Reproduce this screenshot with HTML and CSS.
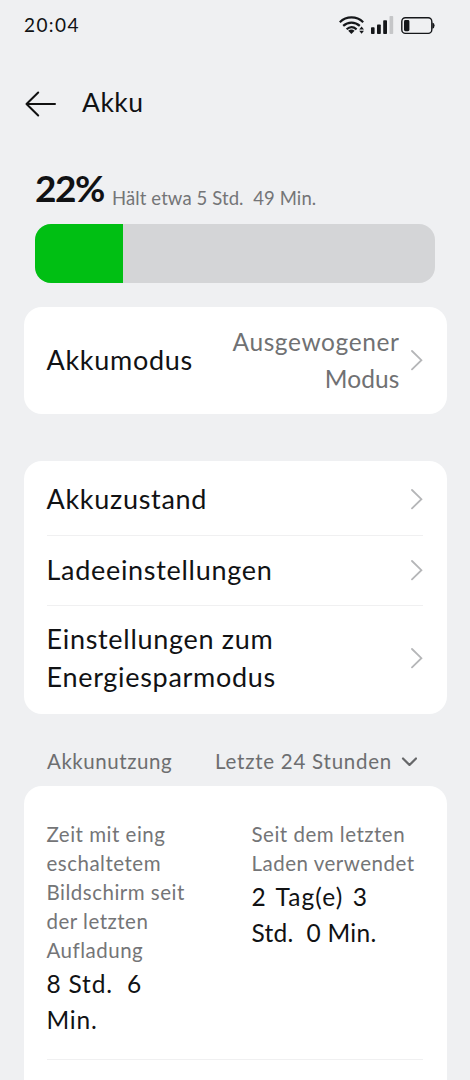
FILE: index.html
```html
<!DOCTYPE html>
<html lang="de">
<head>
    <meta charset="UTF-8">
    <meta name="viewport" content="width=device-width, initial-scale=1.0">
    <title>Akku</title>
    <link rel="stylesheet" href="styles.css">
</head>
<body>
    <div class="status-bar">
        <span class="clock">20:04</span>
        <svg class="status-icons" width="98" height="22" viewBox="338 15 98 22">
            <!-- wifi -->
            <g fill="none" stroke="#15171a" stroke-width="2.2">
                <path d="M339.8 23.2C346.5 16.8 356.5 16.8 363.2 23.2"/>
                <path d="M343.2 26.9C348 22.4 355 22.4 359.8 26.9"/>
                <path d="M346.6 30.3C349.6 27.6 353.4 27.6 356.6 30.3"/>
            </g>
            <path d="M348.2 31.8Q351.4 29.2 354.6 31.8L351.4 35Z" fill="#15171a"/>
            <path d="M359.2 30.5L361.6 27.4L364 30.5ZM359.2 31.7L361.6 34.8L364 31.7Z" fill="#15171a"/>
            <!-- signal -->
            <g fill="#15171a">
                <rect x="371" y="28.3" width="3.6" height="6.7" rx="0.8"/>
                <rect x="377" y="25.4" width="3.8" height="9.6" rx="0.8"/>
                <rect x="383.2" y="21.3" width="3.8" height="13.7" rx="0.8"/>
                <rect x="389.5" y="17" width="3.7" height="18" rx="0.8" fill="#c5c6c8"/>
            </g>
            <!-- battery -->
            <rect x="401.8" y="18.8" width="30" height="15.6" rx="3.6" fill="none" stroke="#15171a" stroke-width="1.4"/>
            <rect x="404" y="21" width="5.4" height="11.2" rx="1.4" fill="#15171a"/>
            <path d="M432.3 23.4Q434.6 24 434.6 26.6Q434.6 29.2 432.3 29.8Z" fill="#15171a"/>
        </svg>
    </div>

    <div class="header">
        <svg width="32" height="26" viewBox="0 0 32 26" fill="none" stroke="#111" stroke-width="2" stroke-linecap="round" stroke-linejoin="round">
            <path d="M30 13H1.5M13.2 1.5L1.5 13L13.2 24.5"/>
        </svg>
        <h1>Akku</h1>
    </div>

    <div class="battery">
        <div class="battery-info">
            <span class="percent">22%</span>
            <span class="remaining">Hält etwa 5 Std.  49 Min.</span>
        </div>
        <div class="battery-bar"><div class="battery-level" style="width: 22%"></div></div>
    </div>

    <div class="card mode-card">
        <div class="row">
            <span class="label">Akkumodus</span>
            <span class="value">Ausgewogener<br><span class="tight">Modus</span></span>
            <svg class="chevron" viewBox="0 0 12 22"><path d="M1 2L10.4 11.2L1 20.4"/></svg>
        </div>
    </div>

    <div class="card list-card">
        <div class="row">
            <span class="label">Akkuzustand</span>
            <svg class="chevron" viewBox="0 0 12 22"><path d="M1 2L10.4 11.2L1 20.4"/></svg>
        </div>
        <div class="row">
            <span class="label">Ladeeinstellungen</span>
            <svg class="chevron" viewBox="0 0 12 22"><path d="M1 2L10.4 11.2L1 20.4"/></svg>
        </div>
        <div class="row tall">
            <span class="label">Einstellungen zum<br>Energiesparmodus</span>
            <svg class="chevron" viewBox="0 0 12 22"><path d="M1 2L10.4 11.2L1 20.4"/></svg>
        </div>
    </div>

    <div class="section-head">
        <span class="section-title">Akkunutzung</span>
        <span class="period">Letzte 24 Stunden</span>
        <svg width="16" height="10" viewBox="0 0 16 10" fill="none" stroke="#666769" stroke-width="2.2" stroke-linecap="round" stroke-linejoin="round">
            <path d="M2 2.5L8.5 9L15 2.5"/>
        </svg>
    </div>

    <div class="card usage-card">
        <div class="usage">
            <div class="stat">
                <p class="stat-label">Zeit mit eing<br>eschaltetem<br>Bildschirm seit<br>der letzten<br>Aufladung</p>
                <p class="stat-value">8 Std.  6<br>Min.</p>
            </div>
            <div class="stat">
                <p class="stat-label">Seit dem letzten<br>Laden verwendet</p>
                <p class="stat-value"><span class="days">2 Tag(e) 3</span><br><span class="tight">Std.  0 Min.</span></p>
            </div>
        </div>
    </div>
</body>
</html>
```

FILE: styles.css
```css
* {
    box-sizing: border-box;
}

body {
    margin: 0;
    height: 1080px;
    overflow: hidden;
    background-color: #eff0f2;
    color: #111214;
    font-family: Lato, "Liberation Sans", sans-serif;
}

.status-bar {
    display: flex;
    align-items: center;
    justify-content: space-between;
    height: 50px;
    padding: 0 34px 0 24px;
}

.clock {
    margin-top: -2px;
    font-size: 19px;
    letter-spacing: 1.4px;
}

.header {
    display: flex;
    align-items: center;
    gap: 25px;
    height: 107px;
    padding-left: 25px;
}

.header h1 {
    margin: -4px 0 0;
    font-size: 26.5px;
    font-weight: 400;
    line-height: 36px;
    letter-spacing: 0.5px;
}

.battery {
    padding: 0 35px;
}

.battery-info {
    display: flex;
    gap: 8px;
    height: 67px;
    white-space: pre;
}

.percent {
    font-size: 37px;
    font-weight: 700;
    line-height: 62px;
    letter-spacing: -1.4px;
}

.remaining {
    color: #747577;
    font-size: 18.5px;
    line-height: 82px;
    letter-spacing: 0.1px;
}

.battery-bar {
    height: 59px;
    border-radius: 16px;
    overflow: hidden;
    background-color: #d4d5d7;
}

.battery-level {
    height: 100%;
    background-color: #00bf13;
}

.card {
    margin: 0 23.5px;
    padding: 0 24px 0 23px;
    border-radius: 18px;
    background-color: #fff;
}

.mode-card {
    margin-top: 24px;
}

.mode-card .row {
    height: 107px;
    padding-bottom: 1px;
}

.list-card {
    margin-top: 47px;
}

.row {
    display: flex;
    align-items: center;
    height: 70px;
    padding-bottom: 1px;
}

.list-card .row:first-child {
    height: 74px;
    padding-top: 2px;
}

.list-card .row + .row {
    border-top: 1px solid #f0f0f1;
}

.list-card .tall {
    height: 109px;
    padding-bottom: 4px;
}

.label {
    flex: 1;
    font-size: 27px;
    line-height: 38px;
    letter-spacing: 0.7px;
}

.value {
    margin-right: 11px;
    color: #707173;
    font-size: 24.5px;
    line-height: 37px;
    letter-spacing: 0.6px;
    text-align: right;
}

.value .tight {
    letter-spacing: 0.1px;
}

.chevron {
    width: 12px;
    height: 22px;
    fill: none;
    stroke: #b5b6b8;
    stroke-width: 1.8;
    stroke-linecap: round;
}

.section-head {
    display: flex;
    align-items: center;
    height: 72px;
    padding: 24px 53px 2px 47px;
    color: #6d6e70;
    font-size: 20.5px;
}

.section-title {
    flex: 1;
    letter-spacing: 0.55px;
}

.period {
    margin-right: 9px;
    letter-spacing: 0.75px;
}

/* continues below the screen edge */
.usage-card {
    height: 294px;
    padding-top: 34px;
    border-radius: 18px 18px 0 0;
}

.usage {
    display: grid;
    grid-template-columns: 205px 1fr;
    height: 240px;
    border-bottom: 1px solid #f0f0f1;
}

.stat p {
    margin: 0;
    white-space: pre;
}

.stat .stat-label {
    color: #747577;
    font-size: 20.5px;
    line-height: 29.1px;
    letter-spacing: 0.5px;
}

.stat .stat-value {
    padding-top: 1px;
    font-size: 24.5px;
    line-height: 36px;
    letter-spacing: 0.8px;
}

.stat-value .days {
    letter-spacing: 1.1px;
    word-spacing: 2px;
}

.stat-value .tight {
    letter-spacing: 0.25px;
}
```
